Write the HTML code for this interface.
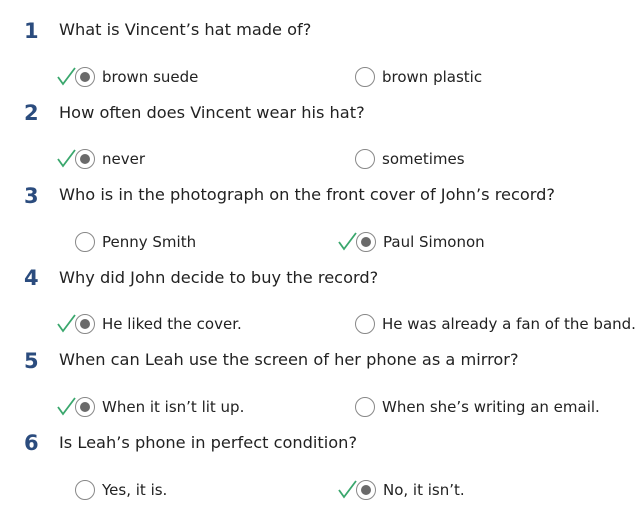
<!DOCTYPE html>
<html><head><meta charset="utf-8"><style>
body{margin:0;width:637px;height:530px;background:#fff;position:relative;overflow:hidden;font-family:"DejaVu Sans","Liberation Sans",sans-serif;color:#222}
.n{position:absolute;left:24px;font-weight:bold;font-size:21px;color:#2b4c7e;line-height:20px}
.q{position:absolute;left:59px;font-size:16.2px;line-height:20px;white-space:nowrap}
.o{position:absolute;font-size:15px;line-height:20px;white-space:nowrap}
.r{position:absolute;width:20px;height:20px;border:1px solid #888;border-radius:50%;box-sizing:border-box;background:#fff}
.r.s::after{content:"";position:absolute;left:4px;top:4px;width:10px;height:10px;border-radius:50%;background:#6a6a6a}
svg{position:absolute}
</style></head><body>
<div class="n" style="top:21px">1</div><div class="q" style="top:20px">What is Vincent’s hat made of?</div>
<svg style="left:57px;top:66px" width="20" height="20"><path d="M1 11 L6 18 L18 2" fill="none" stroke="#3aa76d" stroke-width="1.8"/></svg>
<div class="r s" style="left:75px;top:67px"></div><div class="o" style="left:102px;top:67px">brown suede</div>
<div class="r" style="left:355px;top:67px"></div><div class="o" style="left:382px;top:67px">brown plastic</div>

<div class="n" style="top:103px">2</div><div class="q" style="top:103px">How often does Vincent wear his hat?</div>
<svg style="left:57px;top:148px" width="20" height="20"><path d="M1 11 L6 18 L18 2" fill="none" stroke="#3aa76d" stroke-width="1.8"/></svg>
<div class="r s" style="left:75px;top:149px"></div><div class="o" style="left:102px;top:149px">never</div>
<div class="r" style="left:355px;top:149px"></div><div class="o" style="left:382px;top:149px">sometimes</div>

<div class="n" style="top:186px">3</div><div class="q" style="top:185px">Who is in the photograph on the front cover of John’s record?</div>
<div class="r" style="left:75px;top:232px"></div><div class="o" style="left:102px;top:232px">Penny Smith</div>
<svg style="left:338px;top:231px" width="20" height="20"><path d="M1 11 L6 18 L18 2" fill="none" stroke="#3aa76d" stroke-width="1.8"/></svg>
<div class="r s" style="left:356px;top:232px"></div><div class="o" style="left:383px;top:232px">Paul Simonon</div>

<div class="n" style="top:268px">4</div><div class="q" style="top:268px">Why did John decide to buy the record?</div>
<svg style="left:57px;top:313px" width="20" height="20"><path d="M1 11 L6 18 L18 2" fill="none" stroke="#3aa76d" stroke-width="1.8"/></svg>
<div class="r s" style="left:75px;top:314px"></div><div class="o" style="left:102px;top:314px">He liked the cover.</div>
<div class="r" style="left:355px;top:314px"></div><div class="o" style="left:382px;top:314px">He was already a fan of the band.</div>

<div class="n" style="top:351px">5</div><div class="q" style="top:350px">When can Leah use the screen of her phone as a mirror?</div>
<svg style="left:57px;top:396px" width="20" height="20"><path d="M1 11 L6 18 L18 2" fill="none" stroke="#3aa76d" stroke-width="1.8"/></svg>
<div class="r s" style="left:75px;top:397px"></div><div class="o" style="left:102px;top:397px">When it isn’t lit up.</div>
<div class="r" style="left:355px;top:397px"></div><div class="o" style="left:382px;top:397px">When she’s writing an email.</div>

<div class="n" style="top:433px">6</div><div class="q" style="top:433px">Is Leah’s phone in perfect condition?</div>
<div class="r" style="left:75px;top:480px"></div><div class="o" style="left:102px;top:480px">Yes, it is.</div>
<svg style="left:338px;top:479px" width="20" height="20"><path d="M1 11 L6 18 L18 2" fill="none" stroke="#3aa76d" stroke-width="1.8"/></svg>
<div class="r s" style="left:356px;top:480px"></div><div class="o" style="left:383px;top:480px">No, it isn’t.</div>
</body></html>
